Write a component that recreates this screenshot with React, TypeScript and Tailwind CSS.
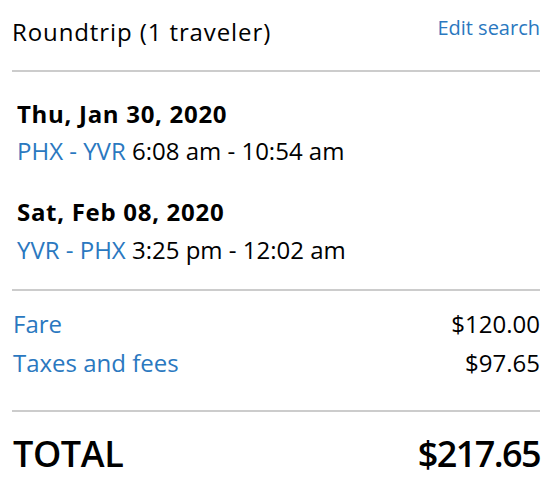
export default function App() {
  return (
    <div
      className="w-[550px] h-[486px] bg-white text-black overflow-hidden pl-3 pr-[10px]"
      style={{ fontFamily: '"Open Sans", sans-serif' }}
    >
      {/* Header */}
      <div className="flex justify-between items-start h-[72px] border-b-2 border-[#cccccc]">
        <div className="text-[24px] leading-[32px] pt-[16px] tracking-[0.9px]">Roundtrip (1 traveler)</div>
        <a className="text-[20px] leading-[28px] pt-[14px] text-[#2a78c0]">Edit search</a>
      </div>

      {/* Flights */}
      <div className="pl-[5px] pt-[26px] pb-[23px] border-b-2 border-[#cccccc] flex flex-col gap-[29px]">
        <div className="flex flex-col gap-[5px]">
          <div className="text-[24px] leading-[32px] font-bold tracking-[0.7px]">Thu, Jan 30, 2020</div>
          <div className="text-[24px] leading-[32px]">
            <span className="text-[#2a78c0]">PHX - YVR</span> 6:08 am - 10:54 am
          </div>
        </div>
        <div className="flex flex-col gap-[6px]">
          <div className="text-[24px] leading-[32px] font-bold tracking-[0.7px]">Sat, Feb 08, 2020</div>
          <div className="text-[24px] leading-[32px]">
            <span className="text-[#2a78c0]">YVR - PHX</span> 3:25 pm - 12:02 am
          </div>
        </div>
      </div>

      {/* Fare breakdown */}
      <div className="pt-[17px] pb-[31px] border-b-2 border-[#cccccc] flex flex-col gap-[7px] pl-px">
        <div className="flex justify-between text-[24px] leading-[32px]">
          <span className="text-[#2a78c0]">Fare</span>
          <span>$120.00</span>
        </div>
        <div className="flex justify-between text-[24px] leading-[32px]">
          <span className="text-[#2a78c0]">Taxes and fees</span>
          <span>$97.65</span>
        </div>
      </div>

      {/* Total */}
      <div className="flex justify-between pt-[20px] text-[36px] leading-[44px] font-semibold pl-px">
        <span className="tracking-[-0.4px]">TOTAL</span>
        <span className="tracking-[-1.6px]">$217.65</span>
      </div>
    </div>
  );
}
